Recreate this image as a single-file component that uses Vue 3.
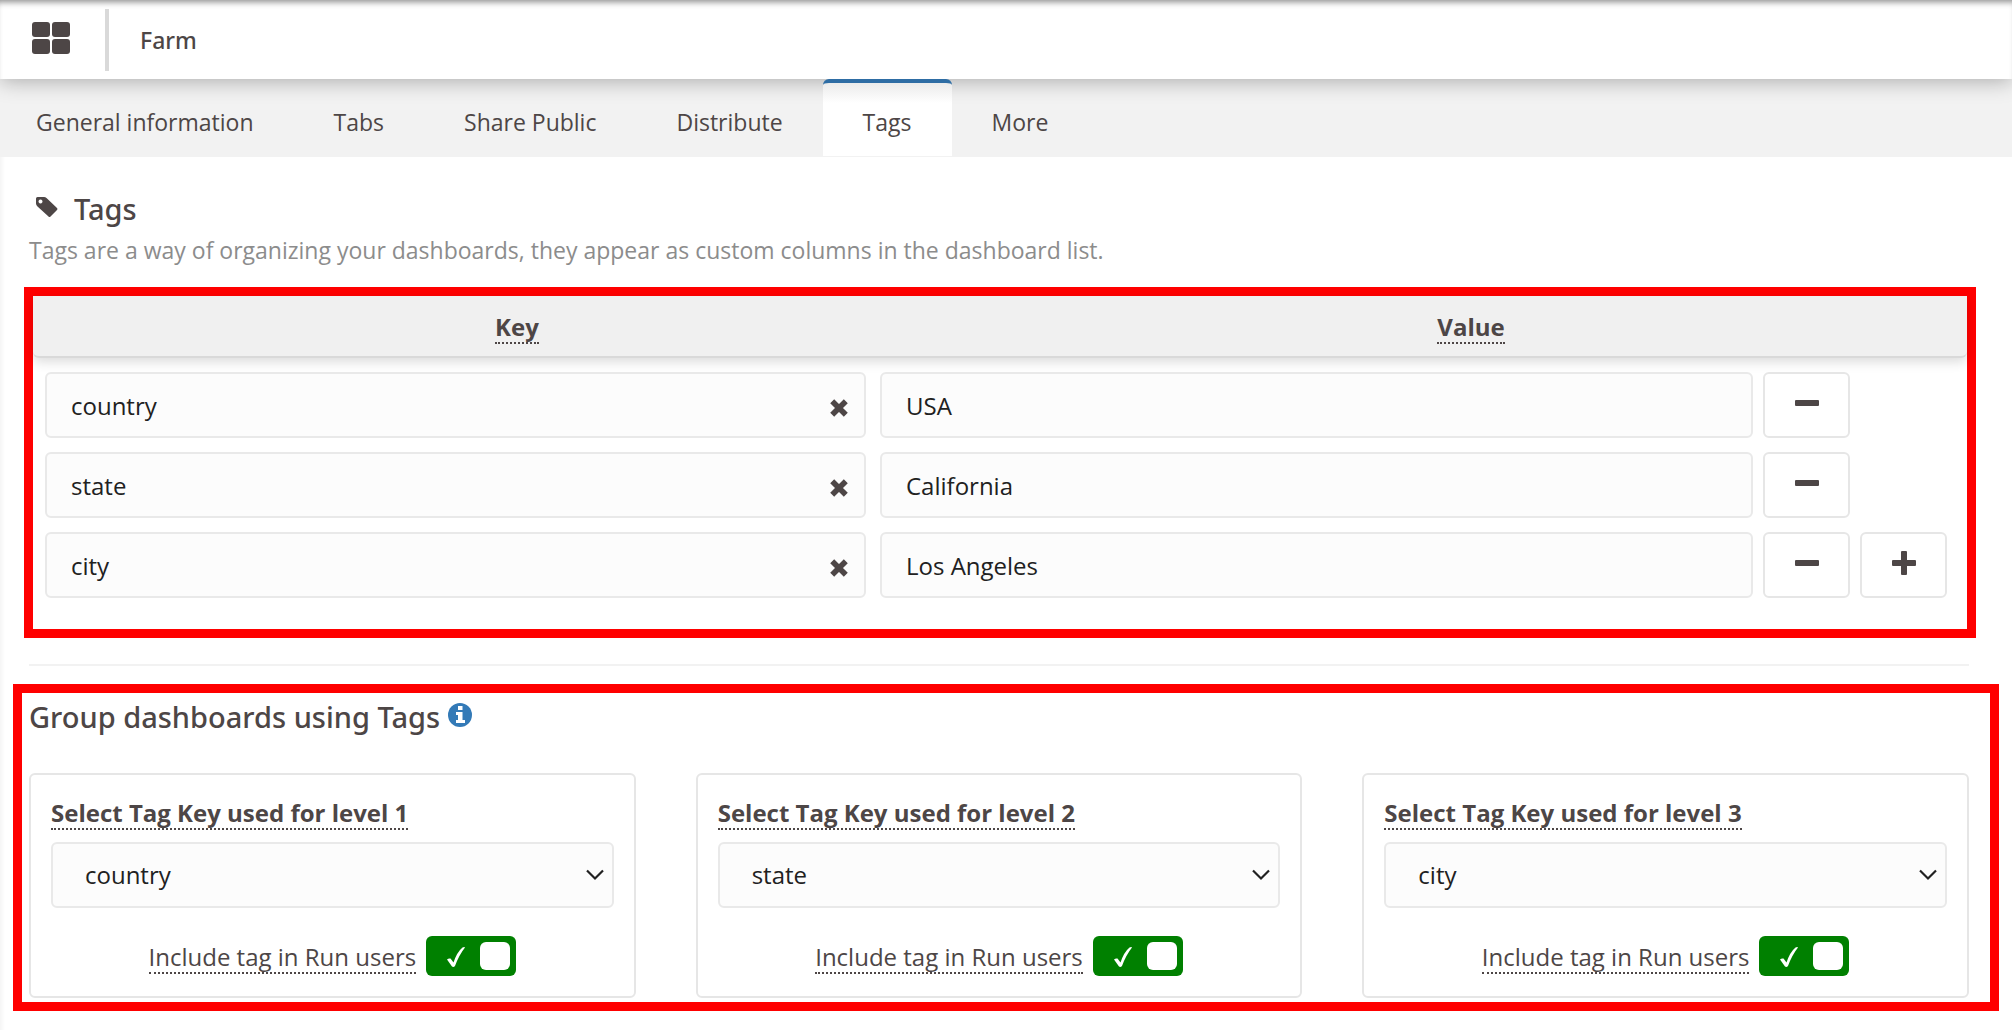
<script setup>
import { reactive } from 'vue'

const tabs = ['General information', 'Tabs', 'Share Public', 'Distribute', 'Tags', 'More']
const activeTab = 'Tags'

const rows = reactive([
  { key: 'country', value: 'USA' },
  { key: 'state', value: 'California' },
  { key: 'city', value: 'Los Angeles' },
])

const levels = reactive([
  { id: 1, key: 'country', include: true },
  { id: 2, key: 'state', include: true },
  { id: 3, key: 'city', include: true },
])

function removeRow(index) {
  rows.splice(index, 1)
}

function addRow() {
  rows.push({ key: '', value: '' })
}
</script>

<template>
  <div class="page">
    <header class="topbar">
      <button class="apps" type="button" aria-label="Dashboards">
        <svg width="38" height="32" viewBox="0 0 38 32" aria-hidden="true">
          <rect x="0" y="0" width="18" height="15" rx="3" />
          <rect x="20" y="0" width="18" height="15" rx="3" />
          <rect x="0" y="17" width="18" height="15" rx="3" />
          <rect x="20" y="17" width="18" height="15" rx="3" />
        </svg>
      </button>
      <h1 class="title">Farm</h1>
    </header>

    <nav class="tabs">
      <a
        v-for="tab in tabs"
        :key="tab"
        href="#"
        class="tab"
        :class="{ active: tab === activeTab }"
      >{{ tab }}</a>
    </nav>

    <main class="content">
      <section class="intro">
        <h2 class="heading">
          <svg class="tag-icon" width="24" height="22" viewBox="0 0 24 22" aria-hidden="true">
            <path fill-rule="evenodd" d="M1 2.500Q1 1 2.500 1H9Q10.500 1 11.500 2L22 12Q23 13 22 14L15.500 20.500Q14.500 21.500 13.500 20.500L2.500 10.500Q1 9 1 7.500ZM5.500 3.500a2 2 0 1 0 .01 0Z" />
          </svg>
          Tags
        </h2>
        <p class="lead">Tags are a way of organizing your dashboards, they appear as custom columns in the dashboard list.</p>
      </section>

      <section class="frame tag-frame">
        <div class="grid-head">
          <div class="head-key"><span class="hint">Key</span></div>
          <div class="head-value"><span class="hint">Value</span></div>
        </div>
        <div class="grid-body">
          <div v-for="(row, i) in rows" :key="i" class="row">
            <div class="key-cell">
              <input v-model="row.key" class="field" type="text" aria-label="Key" />
              <button class="clear" type="button" aria-label="Clear key" @click="row.key = ''">
                <svg width="20" height="20" viewBox="0 0 20 20" aria-hidden="true">
                  <path d="M3.200 3.200L16.800 16.800M16.800 3.200L3.200 16.800" stroke="#4d4646" stroke-width="5.600" stroke-linecap="butt" />
                </svg>
              </button>
            </div>
            <div class="value-cell">
              <input v-model="row.value" class="field" type="text" aria-label="Value" />
            </div>
            <div class="actions">
              <button class="square" type="button" aria-label="Remove tag" @click="removeRow(i)">
                <svg width="26" height="26" viewBox="0 0 26 26" aria-hidden="true">
                  <rect x="1" y="10" width="24" height="6" rx="1" />
                </svg>
              </button>
              <button v-if="i === rows.length - 1" class="square" type="button" aria-label="Add tag" @click="addRow">
                <svg width="26" height="26" viewBox="0 0 26 26" aria-hidden="true">
                  <rect x="1" y="10" width="24" height="6" rx="1" />
                  <rect x="10" y="1" width="6" height="24" rx="1" />
                </svg>
              </button>
            </div>
          </div>
        </div>
      </section>

      <hr class="rule" />

      <section class="frame group-frame">
        <h2 class="heading">
          Group dashboards using Tags
          <svg class="info" width="24" height="24" viewBox="0 0 24 24" aria-hidden="true">
            <circle cx="12" cy="12" r="12" fill="#337ab7" />
            <path fill="#fff" d="M10 3h4.500v4H10zM8 9h6.500v8H17v3H8v-3h2v-5H8z" />
          </svg>
        </h2>
        <div class="cards">
          <div v-for="level in levels" :key="level.id" class="card">
            <label class="hint strong" :for="'level-' + level.id">Select Tag Key used for level {{ level.id }}</label>
            <div class="select-wrap">
              <select :id="'level-' + level.id" v-model="level.key" class="field select">
                <option v-for="row in rows" :key="row.key" :value="row.key">{{ row.key }}</option>
              </select>
              <svg class="chevron" width="20" height="14" viewBox="0 0 20 14" aria-hidden="true">
                <path d="M2 2.500L10 10.500L18 2.500" fill="none" stroke="#212121" stroke-width="2.200" />
              </svg>
            </div>
            <div class="include">
              <label class="hint" :for="'include-' + level.id">Include tag in Run users</label>
              <span class="toggle">
                <input :id="'include-' + level.id" v-model="level.include" type="checkbox" class="switch" />
                <svg v-if="level.include" class="check" width="20" height="22" viewBox="0 0 20 22" aria-hidden="true">
                  <path fill="#fff" d="M1 13.500Q2.500 12 4.500 12.500L7.500 16.500Q11 6 16.500 1.500Q18.500 .5 19 1.500Q13 9 9 20Q7.500 21.500 6 20.500Z" />
                </svg>
              </span>
            </div>
          </div>
        </div>
      </section>
    </main>
  </div>
</template>

<style>
body {
  margin: 0;
  background: #fff;
}
</style>

<style scoped>
.page,
.page * {
  box-sizing: border-box;
}

.page {
  min-height: 100vh;
  color: #4d4646;
  font-family: "Open Sans", "Noto Sans", sans-serif;
  font-size: 24px;
  line-height: 32px;
  background: #fff;
  background-image: linear-gradient(to right, #f5f5f5, #fff 5px);
}

svg {
  display: block;
  fill: #4d4646;
}

button {
  padding: 0;
  border: 0;
  background: none;
  cursor: pointer;
}

.topbar {
  position: relative;
  display: flex;
  align-items: center;
  height: 79px;
  padding: 0 32px;
  background: #fff;
  box-shadow: inset 0 6px 6px -4px #8c8c8c, 0 2px 20px rgba(0, 0, 0, 0.3);
}

.apps {
  margin: 0 35px 4px 0;
}

.title {
  display: flex;
  align-items: center;
  height: 62px;
  margin: 0;
  padding-left: 31px;
  border-left: 4px solid #d9d9d9;
  font-family: "Noto Sans", "Open Sans", sans-serif;
  font-size: 23px;
  font-weight: 500;
}

.tabs {
  display: flex;
  height: 78px;
  padding-bottom: 1px;
  background: #f2f2f2;
  font-size: 23px;
}

.tab {
  display: flex;
  align-items: center;
  padding: 8px 40px 0;
  color: #4d4646;
  text-decoration: none;
}

.tab:first-child {
  padding-left: 36px;
}

.tab.active {
  position: relative;
  padding-top: 4px;
  border-top: 4px solid #2e6da4;
  border-radius: 6px 6px 0 0;
  background: linear-gradient(#ebebeb, #fff 20px);
}

.content {
  padding: 32px 13px 19px 13px;
}

.intro {
  padding: 0 16px;
}

.heading {
  display: flex;
  align-items: center;
  margin: 0;
  font-family: "Noto Sans", "Open Sans", sans-serif;
  font-size: 29px;
  font-weight: 500;
  line-height: 40px;
}

.tag-icon {
  margin: 0 15px 4px 6px;
}

.lead {
  margin: 5px 0 0;
  color: #8c8c8c;
  font-size: 23px;
}

.frame {
  border: 9px solid #f00;
}

.tag-frame {
  margin: 21px 23px 0 11px;
  padding-bottom: 31px;
}

.grid-head {
  display: flex;
  height: 62px;
  padding: 15px 26px 0 0;
  border-bottom: 2px solid #d9d9d9;
  border-radius: 0 0 6px 6px;
  background: #f0f0f0;
  box-shadow: 0 4px 12px rgba(0, 0, 0, 0.14);
  font-weight: 700;
  text-align: center;
}

.head-key {
  flex: 968;
}

.head-value {
  flex: 940;
}

.hint {
  display: inline-block;
  border-bottom: 2px dotted #4d4646;
  line-height: 30px;
}

.strong {
  font-weight: 700;
}

.grid-body {
  display: flex;
  flex-direction: column;
  gap: 14px;
  padding: 14px 19px 0 12px;
}

.row {
  display: flex;
}

.key-cell {
  position: relative;
  flex: 821;
  margin-right: 14px;
}

.value-cell {
  flex: 873;
  margin-right: 10px;
}

.actions {
  display: flex;
  gap: 10px;
  width: 185px;
}

.field {
  display: block;
  width: 100%;
  height: 66px;
  margin: 0;
  padding: 0 24px;
  border: 2px solid #e9e9e9;
  border-radius: 6px;
  background: #fcfcfc;
  color: #212121;
  font-family: inherit;
  font-size: 24px;
  line-height: 32px;
}

.clear {
  position: absolute;
  top: 26px;
  right: 17px;
}

.square {
  display: flex;
  justify-content: center;
  width: 87px;
  height: 66px;
  padding-top: 16px;
  border: 2px solid #e6e6e6;
  border-radius: 6px;
  background: #fff;
}

.rule {
  height: 2px;
  margin: 26px 30px 18px 16px;
  border: 0;
  background: #f2f2f2;
}

.group-frame {
  padding: 4px 21px 4px 7px;
}

.info {
  margin: 0 0 4px 8px;
}

.cards {
  display: flex;
  gap: 60px;
  margin-top: 36px;
}

.card {
  flex: 1;
  height: 225px;
  padding: 22px 20px;
  border: 2px solid #e6e6e6;
  border-radius: 6px;
}

.select-wrap {
  position: relative;
  margin-top: 12px;
}

.select {
  padding: 0 32px;
  appearance: none;
}

.chevron {
  position: absolute;
  top: 26px;
  right: 9px;
  pointer-events: none;
}

.include {
  display: flex;
  justify-content: center;
  gap: 10px;
  margin-top: 28px;
}

.include .hint {
  margin-top: 6px;
  height: 32px;
}

.toggle {
  position: relative;
}

.switch {
  display: flex;
  justify-content: flex-end;
  align-items: center;
  width: 90px;
  height: 40px;
  margin: 0;
  padding: 0 6px;
  border-radius: 6px;
  background: #008000;
  appearance: none;
  cursor: pointer;
}

.switch:not(:checked) {
  justify-content: flex-start;
  background: #b3b3b3;
}

.switch::before {
  content: "";
  width: 30px;
  height: 28px;
  border-radius: 6px;
  background: #fff;
}

.check {
  position: absolute;
  top: 10px;
  left: 20px;
  pointer-events: none;
}
</style>
